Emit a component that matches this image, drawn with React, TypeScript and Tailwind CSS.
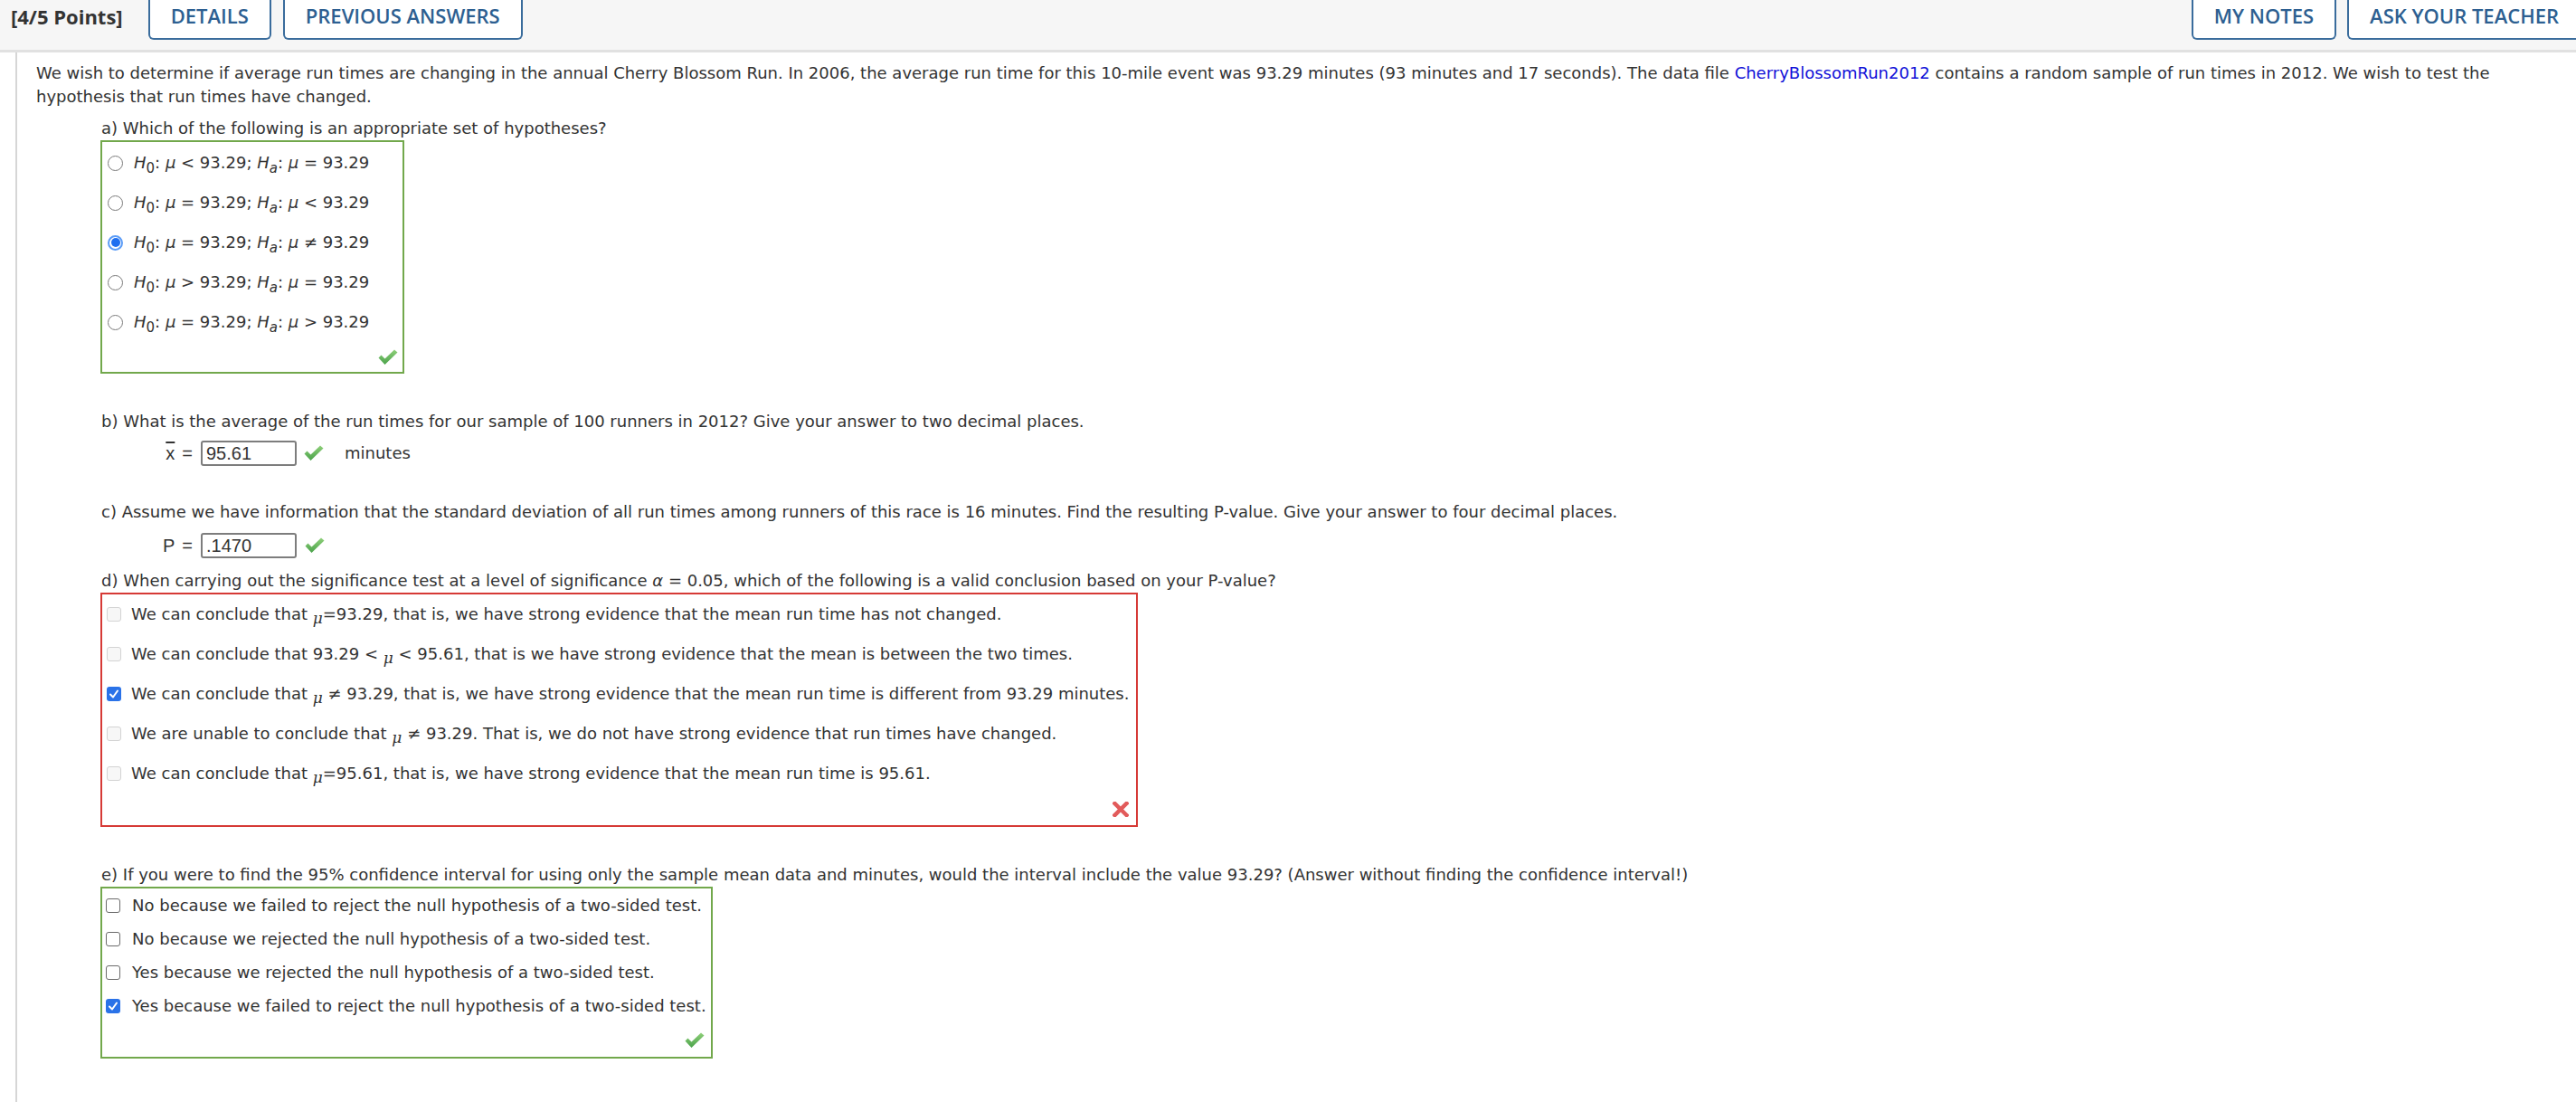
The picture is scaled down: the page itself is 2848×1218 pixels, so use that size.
import React from "react";

const GreenCheck = () => (
  <svg width="22" height="18" viewBox="0 0 22 18" className="block">
    <defs>
      <linearGradient id="gc" x1="0" y1="0" x2="0" y2="1">
        <stop offset="0" stopColor="#8fd07a" />
        <stop offset="1" stopColor="#4aa24a" />
      </linearGradient>
    </defs>
    <path d="M0.5 9.5 L3.5 6.5 L7.5 10.5 L18 0.5 L21.5 3.5 L7.5 17 Z" fill="url(#gc)" />
  </svg>
);

const RedX = () => (
  <svg width="18" height="17" viewBox="0 0 18 17" className="block">
    <path d="M2.5 2 L15.5 15 M15.5 2 L2.5 15" stroke="#e25b5b" strokeWidth="4.5" strokeLinecap="square" />
  </svg>
);

const Radio = ({ on }: { on?: boolean }) =>
  on ? (
    <span className="flex h-[17px] w-[17px] shrink-0 items-center justify-center rounded-full border-[2px] border-[#5b9cf7] bg-white">
      <span className="h-[10px] w-[10px] rounded-full bg-[#1f6ff0]" />
    </span>
  ) : (
    <span className="h-[17px] w-[17px] shrink-0 rounded-full border-[1.5px] border-[#7a7a7a] bg-white" />
  );

const TickBox = () => (
  <span className="flex h-[16px] w-[16px] shrink-0 items-center justify-center rounded-[3px] bg-[#2a72e8]">
    <svg width="12" height="12" viewBox="0 0 12 12">
      <path d="M2 6.5 L5 9.5 L10 2.5" stroke="white" strokeWidth={2} fill="none" strokeLinecap="round" strokeLinejoin="round" />
    </svg>
  </span>
);

const FaintBox = () => (
  <span className="h-[16px] w-[16px] shrink-0 rounded-[3px] border border-[#d3d3d3] bg-[#f7f7f7]" />
);

const EmptyBox = () => (
  <span className="h-[16px] w-[16px] shrink-0 rounded-[3px] border-[1.5px] border-[#6b6b6b] bg-white" />
);

const Mu = () => <i className="font-['DejaVu_Sans']">μ</i>;
const MuLow = () => <i className="relative top-[4px] font-['DejaVu_Serif'] text-[17px]">μ</i>;

const H = ({ sub }: { sub: "0" | "a" }) => (
  <>
    <i>H</i>
    {sub === "0" ? (
      <sub className="relative top-[5px] text-[15px] not-italic">0</sub>
    ) : (
      <sub className="relative top-[5px] text-[15px] italic">a</sub>
    )}
  </>
);

const HypRow = ({ on, children }: { on?: boolean; children: React.ReactNode }) => (
  <div className="flex h-[44px] items-center">
    <span className="ml-[6px] mr-[12px] flex">
      <Radio on={on} />
    </span>
    <span className="whitespace-nowrap">{children}</span>
  </div>
);

const DRow = ({ on, children }: { on?: boolean; children: React.ReactNode }) => (
  <div className="flex h-[44px] items-center">
    <span className="ml-[5px] mr-[11px] flex">{on ? <TickBox /> : <FaintBox />}</span>
    <span className="whitespace-nowrap">{children}</span>
  </div>
);

const ERow = ({ on, children }: { on?: boolean; children: React.ReactNode }) => (
  <div className="flex h-[37px] items-center">
    <span className="ml-[4px] mr-[13px] flex">{on ? <TickBox /> : <EmptyBox />}</span>
    <span className="whitespace-nowrap">{children}</span>
  </div>
);

const HeaderButton = ({ children }: { children: React.ReactNode }) => (
  <div className="flex h-[44px] shrink-0 items-center justify-center rounded-b-[6px] border-x-2 border-b-2 border-t-0 border-[#3a6c9c] bg-white px-[23px] pb-[9px] font-['Open_Sans'] text-[22px] font-semibold text-[#2d5f91]">
    {children}
  </div>
);

const AnswerInput = ({ value }: { value: string }) => (
  <span className="flex h-[28px] w-[106px] items-center rounded-[3px] border-[2px] border-[#7d7d7d] bg-white pl-[4px] font-['Liberation_Sans'] text-[20px] text-[#333]">
    {value}
  </span>
);

export default function App() {
  return (
    <div className="min-h-[1218px] w-full overflow-hidden bg-white font-['DejaVu_Sans',sans-serif] text-[18px] leading-[26px] text-[#333]">
      {/* header */}
      <header className="flex h-[58px] items-start overflow-hidden border-b-[3px] border-[#e1e1e1] bg-[#f6f6f6]">
        <div className="flex h-[35px] items-center pl-[12px] font-['Open_Sans'] text-[22px] font-bold text-[#333]">
          [4/5 Points]
        </div>
        <div className="ml-[28px] flex gap-[13px]">
          <HeaderButton>DETAILS</HeaderButton>
          <HeaderButton>PREVIOUS ANSWERS</HeaderButton>
        </div>
        <div className="ml-auto mr-[-6px] flex gap-[12px]">
          <HeaderButton>MY NOTES</HeaderButton>
          <HeaderButton>ASK YOUR TEACHER</HeaderButton>
        </div>
      </header>

      {/* body */}
      <div className="ml-[17px] min-h-[1160px] border-l-[2px] border-[#d6d6d6] pl-[21px] pr-[60px] pt-[10px]">
        <p>
          We wish to determine if average run times are changing in the annual Cherry Blossom Run. In 2006, the average run
          time for this 10-mile event was 93.29 minutes (93 minutes and 17 seconds). The data file{" "}
          <span className="text-[#1010d8]">CherryBlossomRun2012</span> contains a random sample of run times in 2012. We wish
          to test the hypothesis that run times have changed.
        </p>

        <div className="ml-[72px]">
          {/* a */}
          <div className="mt-[9px]">a) Which of the following is an appropriate set of hypotheses?</div>
          <div className="ml-[-1px] w-[336px] border-[2px] border-[#72a84c] pt-[1px]">
            <HypRow>
              <H sub="0" />: <Mu /> &lt; 93.29; <H sub="a" />: <Mu /> = 93.29
            </HypRow>
            <HypRow>
              <H sub="0" />: <Mu /> = 93.29; <H sub="a" />: <Mu /> &lt; 93.29
            </HypRow>
            <HypRow on>
              <H sub="0" />: <Mu /> = 93.29; <H sub="a" />: <Mu /> ≠ 93.29
            </HypRow>
            <HypRow>
              <H sub="0" />: <Mu /> &gt; 93.29; <H sub="a" />: <Mu /> = 93.29
            </HypRow>
            <HypRow>
              <H sub="0" />: <Mu /> = 93.29; <H sub="a" />: <Mu /> &gt; 93.29
            </HypRow>
            <div className="flex h-[33px] items-end justify-end pb-[7px] pr-[5px]">
              <GreenCheck />
            </div>
          </div>

          {/* b */}
          <div className="mt-[40px]">
            b) What is the average of the run times for our sample of 100 runners in 2012? Give your answer to two decimal
            places.
          </div>
          <div className="mt-[8px] flex items-center">
            <span className="flex w-[110px] justify-end pr-[9px] font-['Liberation_Sans'] text-[20px] text-[#333]">
              <span className="overline decoration-[1.5px]">x</span>
              <span className="ml-[8px]">=</span>
            </span>
            <AnswerInput value="95.61" />
            <span className="ml-[8px]">
              <GreenCheck />
            </span>
            <span className="ml-[23px]">minutes</span>
          </div>

          {/* c */}
          <div className="mt-[38px]">
            c) Assume we have information that the standard deviation of all run times among runners of this race is 16
            minutes. Find the resulting P-value. Give your answer to four decimal places.
          </div>
          <div className="mt-[10px] flex items-center">
            <span className="flex w-[110px] justify-end pr-[9px] font-['Liberation_Sans'] text-[20px] text-[#333]">
              P<span className="ml-[8px]">=</span>
            </span>
            <AnswerInput value=".1470" />
            <span className="ml-[9px]">
              <GreenCheck />
            </span>
          </div>

          {/* d */}
          <div className="mt-[12px]">
            d) When carrying out the significance test at a level of significance <i>α</i> = 0.05, which of the following is
            a valid conclusion based on your P-value?
          </div>
          <div className="ml-[-1px] w-[1147px] border-[2px] border-[#d63a36]">
            <DRow>
              We can conclude that <MuLow />
              =93.29, that is, we have strong evidence that the mean run time has not changed.
            </DRow>
            <DRow>
              We can conclude that 93.29 &lt; <MuLow /> &lt; 95.61, that is we have strong evidence that the mean is between
              the two times.
            </DRow>
            <DRow on>
              We can conclude that <MuLow /> ≠ 93.29, that is, we have strong evidence that the mean run time is different
              from 93.29 minutes.
            </DRow>
            <DRow>
              We are unable to conclude that <MuLow /> ≠ 93.29. That is, we do not have strong evidence that run times have
              changed.
            </DRow>
            <DRow>
              We can conclude that <MuLow />
              =95.61, that is, we have strong evidence that the mean run time is 95.61.
            </DRow>
            <div className="flex h-[35px] items-end justify-end pb-[9px] pr-[8px]">
              <RedX />
            </div>
          </div>

          {/* e */}
          <div className="mt-[40px]">
            e) If you were to find the 95% confidence interval for using only the sample mean data and minutes, would the
            interval include the value 93.29? (Answer without finding the confidence interval!)
          </div>
          <div className="ml-[-1px] w-[677px] border-[2px] border-[#72a84c]">
            <ERow>No because we failed to reject the null hypothesis of a two-sided test.</ERow>
            <ERow>No because we rejected the null hypothesis of a two-sided test.</ERow>
            <ERow>Yes because we rejected the null hypothesis of a two-sided test.</ERow>
            <ERow on>Yes because we failed to reject the null hypothesis of a two-sided test.</ERow>
            <div className="flex h-[38px] items-end justify-end pb-[9px] pr-[7px]">
              <GreenCheck />
            </div>
          </div>
        </div>
      </div>
    </div>
  );
}
